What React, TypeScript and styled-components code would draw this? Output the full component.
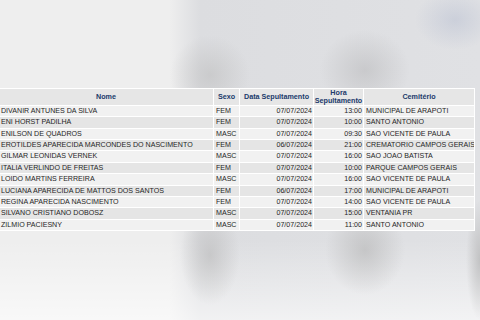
import React from "react";
import styled, { createGlobalStyle } from "styled-components";

const GlobalStyle = createGlobalStyle`
  html, body {
    margin: 0;
    padding: 0;
    width: 480px;
    height: 320px;
    overflow: hidden;
  }
`;

const Root = styled.div`
  width: 480px;
  height: 320px;
  overflow: hidden;
  padding-top: 88px;
  box-sizing: border-box;
  font-family: "Liberation Sans", Arial, sans-serif;
  background:
    radial-gradient(ellipse 30px 50px at 210px 255px, rgba(180, 180, 180, 0.55), transparent),
    radial-gradient(ellipse 40px 45px at 365px 250px, rgba(175, 175, 175, 0.55), transparent),
    radial-gradient(ellipse 14px 60px at 480px 260px, rgba(170, 170, 170, 0.6), transparent),
    radial-gradient(ellipse 40px 40px at 210px 75px, rgba(185, 185, 185, 0.5), transparent),
    radial-gradient(ellipse 45px 40px at 365px 70px, rgba(180, 180, 182, 0.5), transparent),
    radial-gradient(ellipse 40px 30px at 455px 20px, rgba(190, 196, 212, 0.6), transparent),
    linear-gradient(to bottom, transparent 240px, rgba(255, 255, 255, 0.6) 320px),
    linear-gradient(to right, #eeeeee 0px, #eeeeee 170px, #dcdde0 200px, #e0e1e4 480px);
`;

const Table = styled.table`
  margin-left: -2px;
  width: 477px;
  border-collapse: separate;
  border-spacing: 1px;
  background: #ffffff;
  table-layout: fixed;
  font-size: 7.1px;
  color: #262626;
`;

const Head = styled.th<{ w: number }>`
  box-sizing: border-box;
  width: ${(p) => p.w}px;
  background: #e6e6e6;
  color: #203a6b;
  font-weight: bold;
  font-size: 7.2px;
  line-height: 7.6px;
  height: 16px;
  padding: 0;
  text-align: center;
`;

const Row = styled.tr<{ odd: boolean }>`
  background: ${(p) => (p.odd ? "#f1f1f1" : "#e5e5e5")};
`;

const Cell = styled.td<{ align?: "left" | "right" }>`
  box-sizing: border-box;
  padding: 0 1px 0 2px;
  height: 10.36px;
  line-height: 10.36px;
  white-space: nowrap;
  overflow: hidden;
  text-align: ${(p) => p.align ?? "left"};
`;

type Burial = {
  nome: string;
  sexo: string;
  data: string;
  hora: string;
  cemiterio: string;
};

const rows: Burial[] = [
  { nome: "DIVANIR ANTUNES DA SILVA", sexo: "FEM", data: "07/07/2024", hora: "13:00", cemiterio: "MUNICIPAL DE ARAPOTI" },
  { nome: "ENI HORST PADILHA", sexo: "FEM", data: "07/07/2024", hora: "10:00", cemiterio: "SANTO ANTONIO" },
  { nome: "ENILSON DE QUADROS", sexo: "MASC", data: "07/07/2024", hora: "09:30", cemiterio: "SAO VICENTE DE PAULA" },
  { nome: "EROTILDES APARECIDA MARCONDES DO NASCIMENTO", sexo: "FEM", data: "06/07/2024", hora: "21:00", cemiterio: "CREMATORIO CAMPOS GERAIS" },
  { nome: "GILMAR LEONIDAS VERNEK", sexo: "MASC", data: "07/07/2024", hora: "16:00", cemiterio: "SAO JOAO BATISTA" },
  { nome: "ITALIA VERLINDO DE FREITAS", sexo: "FEM", data: "07/07/2024", hora: "10:00", cemiterio: "PARQUE CAMPOS GERAIS" },
  { nome: "LOIDO MARTINS FERREIRA", sexo: "MASC", data: "07/07/2024", hora: "16:00", cemiterio: "SAO VICENTE DE PAULA" },
  { nome: "LUCIANA APARECIDA DE MATTOS DOS SANTOS", sexo: "FEM", data: "06/07/2024", hora: "17:00", cemiterio: "MUNICIPAL DE ARAPOTI" },
  { nome: "REGINA APARECIDA NASCIMENTO", sexo: "FEM", data: "07/07/2024", hora: "14:00", cemiterio: "SAO VICENTE DE PAULA" },
  { nome: "SILVANO CRISTIANO DOBOSZ", sexo: "MASC", data: "07/07/2024", hora: "15:00", cemiterio: "VENTANIA PR" },
  { nome: "ZILMIO PACIESNY", sexo: "MASC", data: "07/07/2024", hora: "11:00", cemiterio: "SANTO ANTONIO" },
];

const App = () => {
  return (
    <Root>
      <GlobalStyle />
      <Table>
        <thead>
          <tr>
            <Head w={214}>Nome</Head>
            <Head w={25}>Sexo</Head>
            <Head w={73}>Data Sepultamento</Head>
            <Head w={49}>
              Hora
              <br />
              Sepultamento
            </Head>
            <Head w={110}>Cemitério</Head>
          </tr>
        </thead>
        <tbody>
          {rows.map((r, i) => (
            <Row key={r.nome} odd={i % 2 === 0}>
              <Cell>{r.nome}</Cell>
              <Cell>{r.sexo}</Cell>
              <Cell align="right">{r.data}</Cell>
              <Cell align="right">{r.hora}</Cell>
              <Cell>{r.cemiterio}</Cell>
            </Row>
          ))}
        </tbody>
      </Table>
    </Root>
  );
};

export default App;
